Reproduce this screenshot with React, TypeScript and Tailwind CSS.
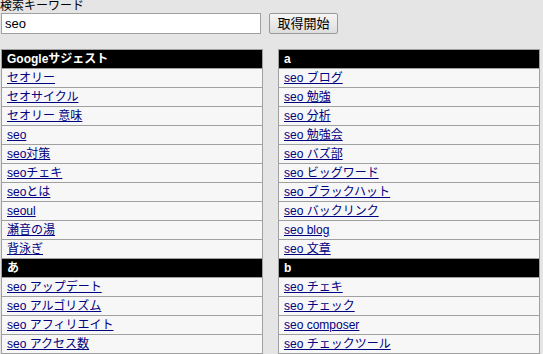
import React from 'react';

type Section = { title: string; items: string[] };

const leftSections: Section[] = [
  {
    title: 'Googleサジェスト',
    items: ['セオリー', 'セオサイクル', 'セオリー 意味', 'seo', 'seo対策', 'seoチェキ', 'seoとは', 'seoul', '瀬音の湯', '背泳ぎ'],
  },
  { title: 'あ', items: ['seo アップデート', 'seo アルゴリズム', 'seo アフィリエイト', 'seo アクセス数'] },
];

const rightSections: Section[] = [
  {
    title: 'a',
    items: ['seo ブログ', 'seo 勉強', 'seo 分析', 'seo 勉強会', 'seo バズ部', 'seo ビッグワード', 'seo ブラックハット', 'seo バックリンク', 'seo blog', 'seo 文章'],
  },
  { title: 'b', items: ['seo チェキ', 'seo チェック', 'seo composer', 'seo チェックツール'] },
];

const SuggestTable: React.FC<{ sections: Section[] }> = ({ sections }) => (
  <div className="w-[262px] border-t border-x border-[#a0a0a0]">
    {sections.map((section) => (
      <React.Fragment key={section.title}>
        {/* 見出し行 */}
        <div className="h-[19px] border-b border-[#a0a0a0] bg-black px-[5px] text-[12px] font-bold leading-[18px] text-white">
          {section.title}
        </div>
        {section.items.map((item) => (
          <div
            key={item}
            className="h-[19px] border-b border-[#a0a0a0] bg-[#f7f7f7] px-[5px] text-[12px] leading-[18px]"
          >
            <a href="#" className="text-[#000080] underline">
              {item}
            </a>
          </div>
        ))}
      </React.Fragment>
    ))}
  </div>
);

export default function App() {
  return (
    <div
      className="h-[354px] overflow-hidden bg-[#e5e5e5] text-black"
      style={{ fontFamily: '"Liberation Sans", "Noto Sans CJK JP", sans-serif' }}
    >
      {/* 検索フォーム */}
      <div className="text-[12px] leading-[13px]">検索キーワード</div>
      <div className="flex items-start gap-[8px] pl-[1px]">
        <input
          type="text"
          defaultValue="seo"
          className="h-[21px] w-[260px] border border-[#a0a0a0] bg-white px-[3px] text-[13px] outline-none"
        />
        <button className="h-[21px] w-[69px] rounded-[2px] border border-[#9a9a9a] bg-gradient-to-b from-[#f6f6f6] to-[#dddddd] text-[13px] leading-[19px]">
          取得開始
        </button>
      </div>

      {/* サジェスト一覧 */}
      <div className="mt-[15px] flex gap-[15px] pl-[1px]">
        <SuggestTable sections={leftSections} />
        <SuggestTable sections={rightSections} />
      </div>
    </div>
  );
}
